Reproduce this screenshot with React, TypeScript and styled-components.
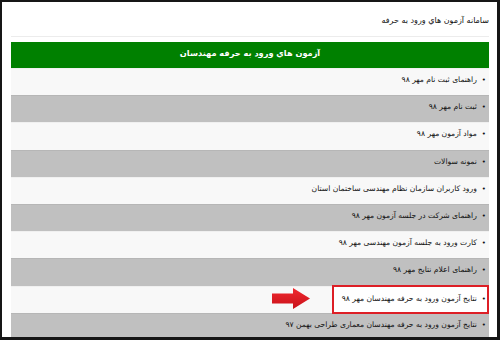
import React from 'react';
import styled, { createGlobalStyle } from 'styled-components';

const GlobalStyle = createGlobalStyle`
  html, body {
    margin: 0;
    padding: 0;
    background: #ffffff;
  }
  * {
    box-sizing: border-box;
  }
`;

interface RowProps {
  striped: boolean;
}

const Frame = styled.div`
  width: 500px;
  height: 340px;
  overflow: hidden;
  background: #ffffff;
  border-style: solid;
  border-color: #161616;
  border-width: 2px 3px 3px 2px;
  padding: 0 8px 0 9px;
  direction: rtl;
  font-family: 'DejaVu Sans', Tahoma, sans-serif;
`;

const SiteTitle = styled.div`
  padding: 11px 0 7px 0;
  line-height: 16px;
  font-size: 8px;
  color: #111111;
  border-bottom: 1px solid #ececec;
  margin-bottom: 5px;
`;

const Panel = styled.section`
  display: flex;
  flex-direction: column;
`;

const PanelHeader = styled.div`
  height: 26px;
  background: #008000;
  color: #ffffff;
  font-size: 8.2px;
  font-weight: bold;
  text-align: center;
  padding-top: 2px;
  line-height: 18px;
`;

const List = styled.ul`
  margin: 0;
  padding: 0;
  list-style: none;
`;

const Row = styled.li<RowProps>`
  display: flex;
  align-items: stretch;
  height: 27.2px;
  background: ${p => (p.striped ? '#c0c0c0' : '#f8f8f8')};
  border-top: 1px solid ${p => (p.striped ? '#b6b6b6' : '#f0f0f0')};
  font-size: 7.6px;
  color: #111111;
`;

const Label = styled.div`
  display: flex;
  align-items: flex-start;
  padding: 3px 3px 0 0;
  line-height: 16px;
  white-space: nowrap;

  &::before {
    content: '•';
    font-size: 7px;
    margin-left: 5px;
  }
`;

const Highlight = styled.div`
  display: flex;
  width: 157px;
  margin-top: -2px;
  height: 29px;
  border: 2px solid #dd1f26;
  background: #ffffff;

  & > div {
    padding-top: 4px;
    padding-right: 1px;
  }
`;

const ArrowMark = styled.svg`
  align-self: center;
  margin-right: 22px;
  margin-top: -3px;
`;

const items = [
  'راهنمای ثبت نام مهر ۹۸',
  'ثبت نام مهر ۹۸',
  'مواد آزمون مهر ۹۸',
  'نمونه سوالات',
  'ورود کاربران سازمان نظام مهندسی ساختمان استان',
  'راهنمای شرکت در جلسه آزمون مهر ۹۸',
  'کارت ورود به جلسه آزمون مهندسی مهر ۹۸',
  'راهنمای اعلام نتایج مهر ۹۸',
  'نتایج آزمون ورود به حرفه مهندسان مهر ۹۸',
  'نتایج آزمون ورود به حرفه مهندسان معماری طراحی بهمن ۹۷',
];

const markedIndex = 8;

const Arrow: React.FC = () => (
  <ArrowMark width="38" height="21" viewBox="0 0 38 21">
    <defs>
      <linearGradient id="arrowFill" x1="0" y1="0" x2="0" y2="1">
        <stop offset="0" stopColor="#f0282e" />
        <stop offset="1" stopColor="#c8121a" />
      </linearGradient>
    </defs>
    <path d="M0 5.5 H21 V0 L38 10.5 L21 21 V15.5 H0 Z" fill="url(#arrowFill)" />
  </ArrowMark>
);

const App: React.FC = () => {
  return (
    <>
      <GlobalStyle />
      <Frame>
        <SiteTitle>سامانه آزمون هاي ورود به حرفه</SiteTitle>
        <Panel>
          <PanelHeader>آزمون هاي ورود به حرفه مهندسان</PanelHeader>
          <List>
            {items.map((text, index) => (
              <Row key={index} striped={index % 2 === 1}>
                {index === markedIndex ? (
                  <>
                    <Highlight>
                      <Label>{text}</Label>
                    </Highlight>
                    <Arrow />
                  </>
                ) : (
                  <Label>{text}</Label>
                )}
              </Row>
            ))}
          </List>
        </Panel>
      </Frame>
    </>
  );
};

export default App;
